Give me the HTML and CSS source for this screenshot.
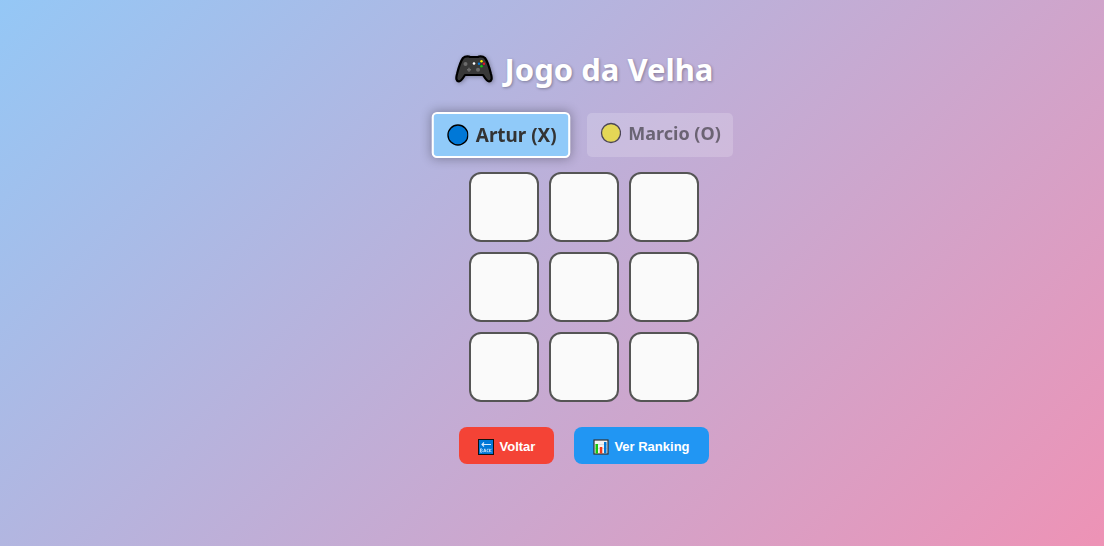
FILE: index.html
```html
<!DOCTYPE html>
<html lang="pt-BR">
<head>
<meta charset="utf-8">
<meta name="viewport" content="width=device-width, initial-scale=1">
<title>Jogo da Velha</title>
<link rel="stylesheet" href="styles.css">
</head>
<body>
<main class="game">
  <h1 class="title">
    <svg class="pad" viewBox="0 0 38 28" aria-hidden="true">
      <path d="M8 3 Q10 1 14 1.500 L15 2 H23 L24 1.500 Q28 1 30 3 Q33 7 36 19 Q38 26 34 26.500 Q32 26.500 28 20 H10 Q6 26.500 4 26.500 Q0 26 2 19 Q5 7 8 3Z" fill="#383838" stroke="#000" stroke-width="2.200" stroke-linejoin="round"/>
      <circle cx="10.500" cy="9" r="2" fill="#6b6b6b"/>
      <circle cx="23" cy="14.800" r="2" fill="#6b6b6b"/>
      <path d="M12 14.800h4M14 12.800v4" stroke="#6b6b6b" stroke-width="1.500"/>
      <circle cx="19" cy="8.500" r="1.300" fill="#fff"/>
      <circle cx="26.500" cy="6.300" r="1.200" fill="#fff100"/>
      <circle cx="24" cy="8.700" r="1.200" fill="#0078d7"/>
      <circle cx="29" cy="8.700" r="1.200" fill="#e81224"/>
      <circle cx="26.500" cy="11.200" r="1.200" fill="#16c60c"/>
    </svg>
    <span>Jogo da Velha</span>
  </h1>

  <div class="players">
    <div class="player player-active">
      <svg class="disc" viewBox="0 0 22 22" aria-hidden="true"><circle cx="12" cy="11" r="9.500" fill="#0078d7" stroke="#000" stroke-width="1.300"/></svg>
      <span>Artur (X)</span>
    </div>
    <div class="player player-waiting">
      <svg class="disc" viewBox="0 0 22 22" aria-hidden="true"><circle cx="12" cy="11" r="9.500" fill="#fff100" stroke="#000" stroke-width="1.300"/></svg>
      <span>Marcio (O)</span>
    </div>
  </div>

  <div class="board">
    <button class="cell" type="button" aria-label="Casa 1"></button>
    <button class="cell" type="button" aria-label="Casa 2"></button>
    <button class="cell" type="button" aria-label="Casa 3"></button>
    <button class="cell" type="button" aria-label="Casa 4"></button>
    <button class="cell" type="button" aria-label="Casa 5"></button>
    <button class="cell" type="button" aria-label="Casa 6"></button>
    <button class="cell" type="button" aria-label="Casa 7"></button>
    <button class="cell" type="button" aria-label="Casa 8"></button>
    <button class="cell" type="button" aria-label="Casa 9"></button>
  </div>

  <div class="actions">
    <button class="action action-back" type="button">
      <svg class="icon" viewBox="0 0 16 16" aria-hidden="true">
        <rect x=".5" y=".5" width="15" height="15" fill="#0078d7" stroke="#111"/>
        <path d="M13 5.500H4M6 3.500l-2 2 2 2" fill="none" stroke="#d5eaff" stroke-width="1.100"/>
        <path d="M2.500 9.800v3.400h1.300l.5-.8-.6-.9.500-.8-.5-.9zM5.600 13.200l1.200-3.400 1.200 3.400M6 12.200h1.600M10.600 10.200q-1.600-.6-1.600 1.300t1.600 1.300M11.600 9.800v3.400M13.500 9.800l-1.600 1.700 1.600 1.700" fill="none" stroke="#d5eaff" stroke-width=".8"/>
      </svg>
      <span>Voltar</span>
    </button>
    <button class="action action-ranking" type="button">
      <svg class="icon" viewBox="0 0 16 16" aria-hidden="true">
        <rect x="1" y="1" width="14" height="14" fill="#f2f2f2" stroke="#333" stroke-width="1.200"/>
        <path d="M2 5.500h12M2 9.500h12" stroke="#ccc" stroke-width=".6"/>
        <rect x="2.500" y="5" width="2.500" height="9.500" fill="#16c60c"/>
        <rect x="6.800" y="8" width="2.500" height="6.500" fill="#f03a17"/>
        <rect x="11" y="3" width="2.500" height="11.500" fill="#0078d7"/>
      </svg>
      <span>Ver Ranking</span>
    </button>
  </div>
</main>
</body>
</html>
```
FILE: styles.css
```css
* {
  box-sizing: border-box;
}

body {
  margin: 0;
  min-height: 100vh;
  background: linear-gradient(135deg, #90caf9 -5%, #f48fb1 107%);
  color: #333;
  font-family: "Segoe UI", "Noto Sans", sans-serif;
}

.game {
  display: flex;
  flex-direction: column;
  align-items: center;
  padding: 47px 0 48px 64px;
}

.title {
  display: flex;
  align-items: center;
  gap: 12px;
  margin: 0 0 22px;
  color: #fff;
  font-size: 31px;
  line-height: 44px;
  text-shadow: 1px 1px 3px rgba(0, 0, 0, 0.3);
}

.pad {
  width: 38px;
  height: 28px;
  filter: drop-shadow(1px 1px 2px rgba(0, 0, 0, 0.3));
}

.players {
  display: flex;
  gap: 20px;
  margin-bottom: 15px;
}

.player {
  display: flex;
  align-items: flex-start;
  gap: 7px;
  padding: 9px 12px;
  border-radius: 5px;
  font-size: 18px;
  font-weight: bold;
  line-height: 22px;
}

.player-active {
  border: 2px solid #fff;
  padding: 9px 11px;
  background: #90caf9;
  box-shadow: 0 0 10px rgba(0, 0, 0, 0.3);
  transform: scale(1.05);
}

.player-waiting {
  background: rgba(255, 255, 255, 0.3);
  opacity: 0.6;
}

.disc {
  width: 22px;
  height: 22px;
}

.board {
  display: grid;
  grid-template-columns: repeat(3, 70px);
  grid-auto-rows: 70px;
  gap: 10px;
  margin-bottom: 25px;
}

.cell {
  padding: 0;
  border: 2px solid #555;
  border-radius: 12px;
  background: #fafafa;
  cursor: pointer;
}

.actions {
  display: flex;
  gap: 20px;
}

.action {
  display: flex;
  align-items: center;
  gap: 5px;
  padding: 11px 19px 9px;
  border: 0;
  border-radius: 8px;
  color: #fff;
  font-family: "Liberation Sans", Arial, sans-serif;
  font-size: 13px;
  font-weight: bold;
  line-height: 17px;
  cursor: pointer;
}

.action-back {
  background: #f44336;
}

.action-ranking {
  background: #2196f3;
}

.icon {
  width: 16px;
  height: 16px;
}
```
